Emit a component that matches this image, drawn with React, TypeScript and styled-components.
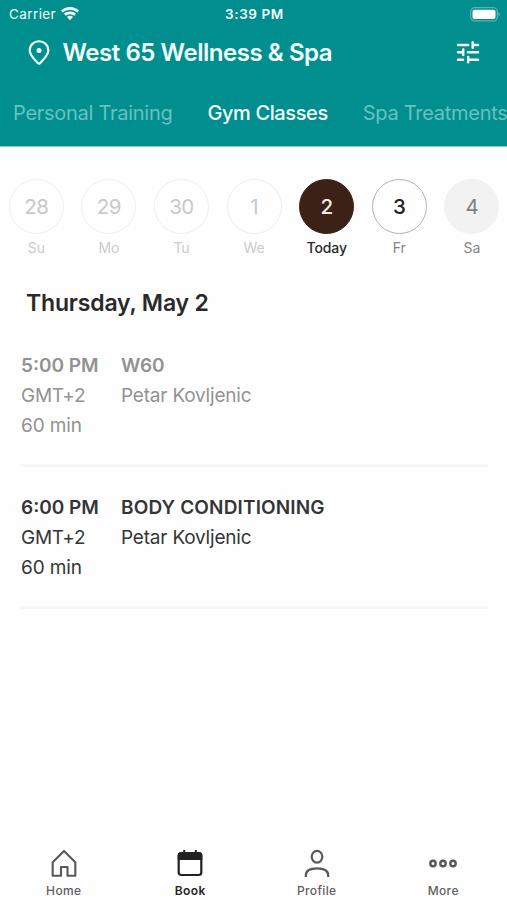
import React from "react";
import styled, { createGlobalStyle } from "styled-components";

const GlobalStyle = createGlobalStyle`
  *, *::before, *::after { box-sizing: border-box; }
  body { margin: 0; background: #fefefe; overflow: hidden; }
  button { font: inherit; letter-spacing: inherit; color: inherit; background: none; border: 0; padding: 0; }
  svg { display: block; flex: none; }
`;

const Screen = styled.div`
  width: 507px;
  height: 900px;
  display: flex;
  flex-direction: column;
  overflow: hidden;
  background: #fefefe;
  color: #29292b;
  font-family: Inter, "Liberation Sans", sans-serif;
  white-space: nowrap;
`;

const Header = styled.header`
  height: 147px;
  flex: none;
  background: #008f8e;
  border-bottom: 1px solid #8ccccb;
  color: #f4fffe;
`;

const StatusBar = styled.div`
  height: 28px;
  display: grid;
  grid-template-columns: 1fr auto 1fr;
  align-items: center;
  padding: 0 7px 0 9px;
`;

const Carrier = styled.div`
  display: flex;
  align-items: center;
  gap: 5px;
  font-size: 13.5px;
  letter-spacing: 0.4px;
`;

const Clock = styled.div`
  font-size: 13.5px;
  font-weight: 600;
  letter-spacing: 0.6px;
`;

const Battery = styled.div`
  justify-self: end;
`;

const TitleBar = styled.div`
  height: 48px;
  display: flex;
  align-items: center;
  padding: 0 27px 0 28px;
`;

const Title = styled.h1`
  flex: 1;
  margin: 0 0 0 12.5px;
  font-size: 24px;
  font-weight: 600;
  letter-spacing: -0.45px;
`;

const Tabs = styled.nav`
  height: 70px;
  display: flex;
  align-items: center;
  gap: 35px;
  padding: 3px 0 0 13px;
`;

const Tab = styled.button<{ $active?: boolean }>`
  flex: none;
  font-size: 20px;
  font-weight: ${(p) => (p.$active ? 500 : 400)};
  letter-spacing: ${(p) => (p.$active ? "-0.4px" : "-0.27px")};
  color: ${(p) => (p.$active ? "#f4fffe" : "#68c1c1")};
`;

const Week = styled.div`
  display: grid;
  grid-template-columns: repeat(7, 72.6px);
  height: 110px;
  flex: none;
  padding-top: 32px;
`;

type DayState = "past" | "today" | "open" | "closed";

const dayColors: Record<DayState, { text: string; border: string; fill: string; label: string }> = {
  past: { text: "#c9c9c9", border: "#eeeeee", fill: "#fefefe", label: "#cbcbcb" },
  today: { text: "#f5ebe4", border: "#3c2216", fill: "#3c2216", label: "#29292b" },
  open: { text: "#222224", border: "#b2b2b2", fill: "#fefefe", label: "#858585" },
  closed: { text: "#808080", border: "#f2f2f2", fill: "#f2f2f2", label: "#858585" },
};

const Day = styled.button`
  display: flex;
  flex-direction: column;
  align-items: center;
`;

const DayCircle = styled.span<{ $state: DayState }>`
  width: 55px;
  height: 55px;
  display: flex;
  align-items: center;
  justify-content: center;
  border-radius: 50%;
  border: 1.5px solid ${(p) => dayColors[p.$state].border};
  background: ${(p) => dayColors[p.$state].fill};
  color: ${(p) => dayColors[p.$state].text};
  font-size: 20.5px;
  font-weight: ${(p) => (p.$state === "open" || p.$state === "today" ? 500 : 400)};
  letter-spacing: -0.5px;
`;

const DayLabel = styled.span<{ $state: DayState }>`
  margin-top: 5px;
  line-height: 18px;
  font-size: 14px;
  font-weight: ${(p) => (p.$state === "today" ? 500 : 400)};
  letter-spacing: ${(p) => (p.$state === "today" ? "-0.1px" : "-0.1px")};
  color: ${(p) => dayColors[p.$state].label};
`;

const DateHeading = styled.h2`
  margin: 0;
  height: 67px;
  flex: none;
  padding: 31px 0 0 26px;
  font-size: 23px;
  line-height: 30px;
  font-weight: 600;
  letter-spacing: -0.17px;
`;

const ClassList = styled.main`
  flex: 1;
  padding: 1px 19px 0 20px;
`;

const ClassRow = styled.article<{ $past?: boolean }>`
  height: 142px;
  display: grid;
  grid-template-columns: 100px 1fr;
  padding: 26px 0 0 1px;
  border-bottom: 3px solid #f6f6f6;
  color: ${(p) => (p.$past ? "#929292" : "#353537")};
`;

const Line = styled.div<{ $strong?: boolean; $tracking?: number }>`
  height: 30px;
  line-height: 30px;
  font-size: 19px;
  font-weight: ${(p) => (p.$strong ? 600 : 400)};
  letter-spacing: ${(p) => p.$tracking ?? 0}px;
`;

const TabBar = styled.nav`
  height: 65px;
  flex: none;
  display: grid;
  grid-template-columns: repeat(4, 126.5px);
  padding-left: 0.5px;
`;

const TabBarItem = styled.button<{ $active?: boolean }>`
  display: flex;
  flex-direction: column;
  align-items: center;
  padding-top: 12px;
  font-size: 12px;
  line-height: 16px;
  font-weight: ${(p) => (p.$active ? 600 : 500)};
  letter-spacing: 0.35px;
  color: ${(p) => (p.$active ? "#252527" : "#606063")};
  & > svg { margin: 0 0 4px; }
`;

const WifiIcon = () => (
  <svg width="18" height="14" viewBox="0 0 18 14" fill="#f4fffe">
    <path d="M9 0C5.500 0 2.300 1.300 0 3.500L1.800 5.500A10.500 10.500 0 0 1 16.200 5.500L18 3.500C15.700 1.300 12.500 0 9 0Z" />
    <path d="M9 4.500C6.700 4.500 4.600 5.300 3 6.800L4.800 8.800A6.200 6.200 0 0 1 13.200 8.800L15 6.800C13.400 5.300 11.300 4.500 9 4.500Z" />
    <path d="M9 8.800C7.900 8.800 6.800 9.200 6 9.900L9 13.200L12 9.900C11.200 9.200 10.100 8.800 9 8.800Z" />
  </svg>
);

const BatteryIcon = () => (
  <svg width="30" height="15" viewBox="0 0 30 15">
    <rect x=".7" y=".7" width="26.600" height="13.200" rx="4" fill="none" stroke="#58b5b4" strokeWidth="1.200" />
    <rect x="2.500" y="2.700" width="23" height="9.200" rx="2" fill="#fff" />
    <path d="M28.400 5.300C30 5.800 30 8.800 28.400 9.300Z" fill="#6fc0bf" />
  </svg>
);

const PinIcon = () => (
  <svg width="22" height="25" viewBox="0 0 21 24">
    <path
      d="M10.500 1.200C5.400 1.200 1.500 5 1.500 9.900C1.500 14.500 5.200 17.800 9.300 22Q10.500 23.200 11.700 22C15.800 17.800 19.500 14.500 19.500 9.900C19.500 5 15.600 1.200 10.500 1.200Z"
      fill="none" stroke="#f4fffe" strokeWidth="2.100"
    />
    <circle cx="10.500" cy="10" r="2.400" fill="#f4fffe" />
  </svg>
);

const FilterIcon = () => (
  <svg width="24" height="23" viewBox="0 0 24 23" fill="none" stroke="#f4fffe" strokeWidth="2.500" strokeLinecap="round">
    <path d="M2 4H12.200M16.700 4H22M16.700 1.300V6.800M2 11.300H7.200M7.200 8.600V14.100M12 11.300H22M2 18.700H7M12.200 18.700H22M12.200 16V21.300" />
  </svg>
);

const HomeIcon = () => (
  <svg width="28" height="32" viewBox="0 0 28 32" fill="none" stroke="#58585b" strokeWidth="2.100" strokeLinejoin="round">
    <path d="M2.700 15.200L14 4L25.300 15.200V28.800H17.500V20H11V28.800H2.700Z" />
  </svg>
);

const CalendarIcon = () => (
  <svg width="28" height="32" viewBox="0 0 28 32">
    <path d="M8.200 3V8M19.800 3V8" stroke="#222224" strokeWidth="2" />
    <rect x="2.700" y="6" width="22.600" height="22" rx="2.500" fill="none" stroke="#222224" strokeWidth="2.200" />
    <path d="M1.700 8.500Q1.700 5 5 5H23Q26.300 5 26.300 8.500V13H1.700Z" fill="#222224" />
  </svg>
);

const ProfileIcon = () => (
  <svg width="28" height="32" viewBox="0 0 28 32" fill="none" stroke="#58585b" strokeWidth="2.200">
    <ellipse cx="14" cy="9.800" rx="5.300" ry="5.900" />
    <path d="M2.800 30V28.500C2.800 23.700 6.500 21.400 14 21.400C21.500 21.400 25.200 23.700 25.200 28.500V30" />
  </svg>
);

const MoreIcon = () => (
  <svg width="28" height="32" viewBox="0 0 28 32" fill="none" stroke="#58585b" strokeWidth="2.400">
    <circle cx="4" cy="16.500" r="2.700" />
    <circle cx="14" cy="16.500" r="2.700" />
    <circle cx="24" cy="16.500" r="2.700" />
  </svg>
);

const days: { num: number; label: string; state: DayState }[] = [
  { num: 28, label: "Su", state: "past" },
  { num: 29, label: "Mo", state: "past" },
  { num: 30, label: "Tu", state: "past" },
  { num: 1, label: "We", state: "past" },
  { num: 2, label: "Today", state: "today" },
  { num: 3, label: "Fr", state: "open" },
  { num: 4, label: "Sa", state: "closed" },
];

const classes = [
  { time: "5:00 PM", name: "W60", past: true },
  { time: "6:00 PM", name: "BODY CONDITIONING", past: false },
];

export default function App() {
  return (
    <Screen>
      <GlobalStyle />
      <Header>
        <StatusBar>
          <Carrier>Carrier <WifiIcon /></Carrier>
          <Clock>3:39 PM</Clock>
          <Battery><BatteryIcon /></Battery>
        </StatusBar>
        <TitleBar>
          <PinIcon />
          <Title>West 65 Wellness &amp; Spa</Title>
          <FilterIcon />
        </TitleBar>
        <Tabs>
          <Tab>Personal Training</Tab>
          <Tab $active>Gym Classes</Tab>
          <Tab>Spa Treatments</Tab>
        </Tabs>
      </Header>
      <Week>
        {days.map((d) => (
          <Day key={d.num}>
            <DayCircle $state={d.state}>{d.num}</DayCircle>
            <DayLabel $state={d.state}>{d.label}</DayLabel>
          </Day>
        ))}
      </Week>
      <DateHeading>Thursday, May 2</DateHeading>
      <ClassList>
        {classes.map((c) => (
          <ClassRow key={c.time} $past={c.past}>
            <div>
              <Line $strong $tracking={0}>{c.time}</Line>
              <Line $tracking={-0.3}>GMT+2</Line>
              <Line $tracking={-0.1}>60 min</Line>
            </div>
            <div>
              <Line $strong $tracking={c.past ? -0.3 : 0.15}>{c.name}</Line>
              <Line $tracking={-0.2}>Petar Kovljenic</Line>
            </div>
          </ClassRow>
        ))}
      </ClassList>
      <TabBar>
        <TabBarItem><HomeIcon />Home</TabBarItem>
        <TabBarItem $active><CalendarIcon />Book</TabBarItem>
        <TabBarItem><ProfileIcon />Profile</TabBarItem>
        <TabBarItem><MoreIcon />More</TabBarItem>
      </TabBar>
    </Screen>
  );
}
